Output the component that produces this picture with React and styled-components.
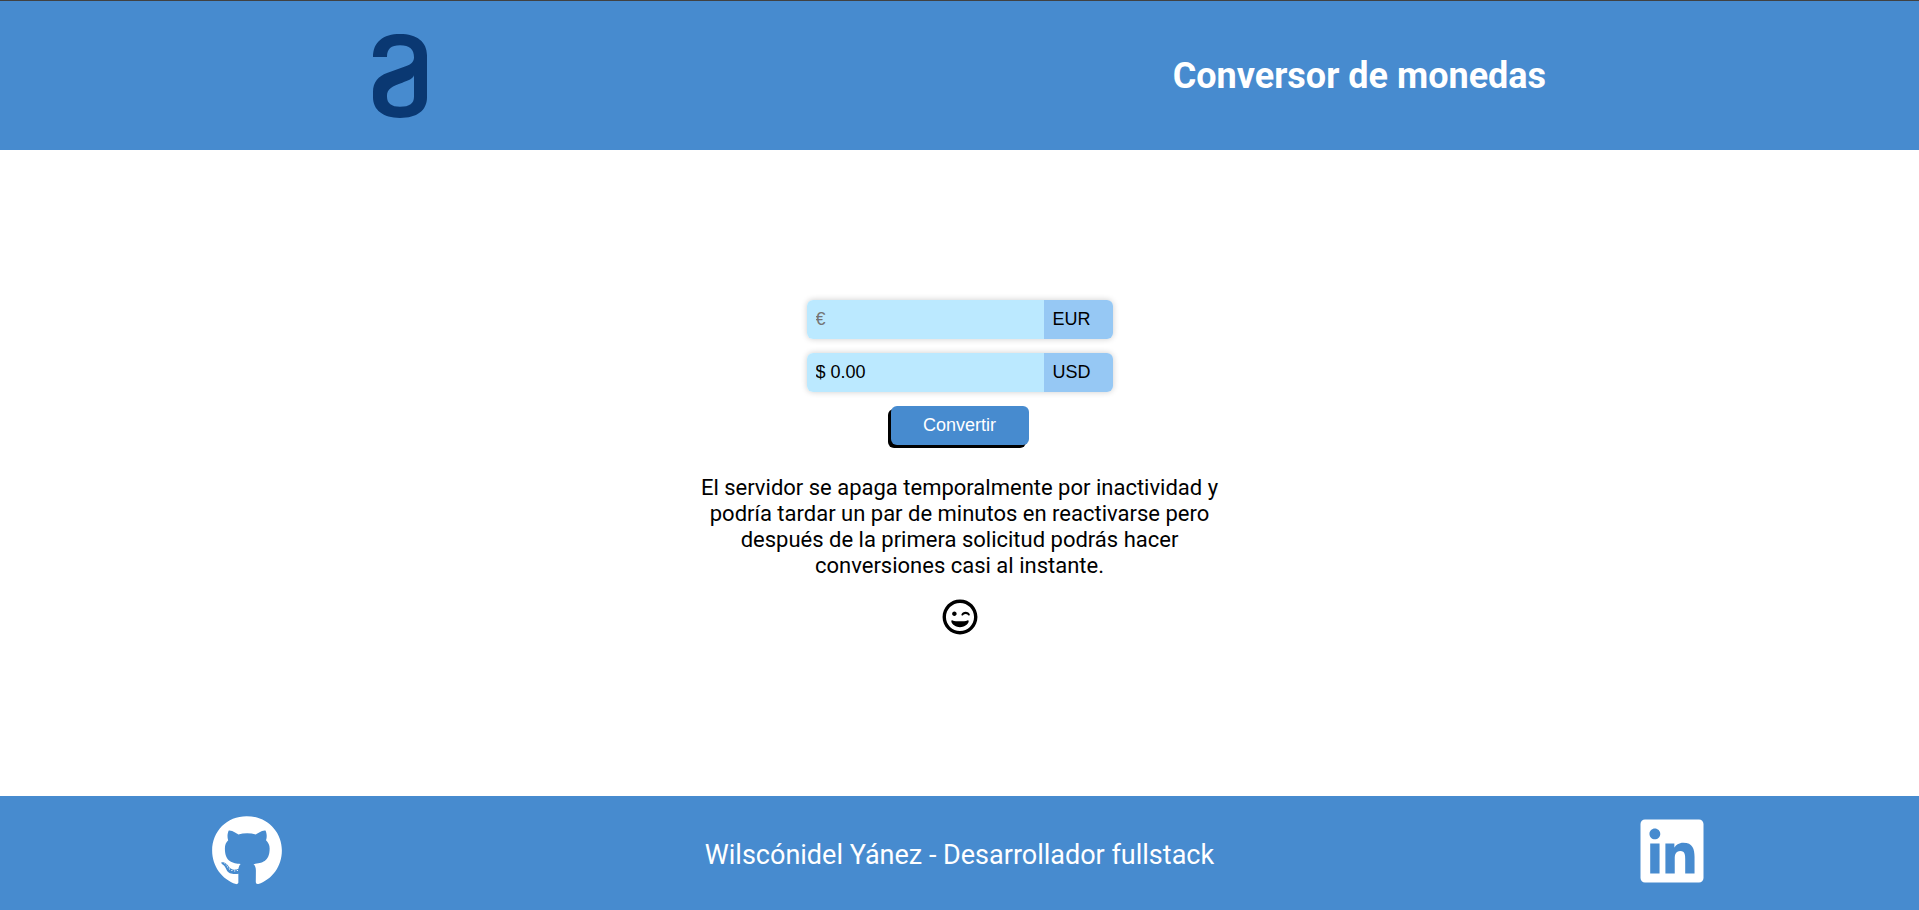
import React, { useState } from "react";
import styled, { createGlobalStyle } from "styled-components";
import { FaGithub, FaLinkedin, FaRegGrinWink } from "react-icons/fa";

const GlobalStyle = createGlobalStyle`
  *, *::before, *::after { box-sizing: border-box; }
  body {
    margin: 0;
    background: #fff;
    color: #000;
    font-family: Roboto, "Liberation Sans", sans-serif;
  }
`;

const Page = styled.div`
  min-height: 100vh;
  display: flex;
  flex-direction: column;
`;

const Header = styled.header`
  min-height: 150px;
  display: flex;
  align-items: center;
  justify-content: space-around;
  background: #478bcf;
  border-top: 1px solid #414141;
`;

const Logo = styled.svg`
  width: 54px;
  height: 84px;
  fill: #0a3872;
`;

const Title = styled.h1`
  margin: 0;
  color: #fff;
  font-size: 36px;
  line-height: 42px;
  font-weight: 700;
`;

const Main = styled.main`
  flex: 1;
  display: flex;
  flex-direction: column;
  align-items: center;
  justify-content: center;
`;

const Form = styled.form`
  display: flex;
  flex-direction: column;
  align-items: center;
  gap: 14px;
`;

const Field = styled.div`
  display: flex;
  width: 306px;
  height: 39px;
  overflow: hidden;
  border-radius: 6px;
  box-shadow: 0 0 6px rgba(0, 0, 0, 0.2);
`;

const AmountInput = styled.input`
  flex: 1;
  min-width: 0;
  border: 0;
  outline: 0;
  padding: 0 9px;
  background: #bbe9ff;
  color: #000;
  font: 18px "Liberation Sans", sans-serif;
  &::placeholder { color: #757575; }
`;

const CurrencySelect = styled.select`
  appearance: none;
  width: 69px;
  border: 0;
  border-radius: 0;
  outline: 0;
  padding: 0 9px;
  background: #96c8f4;
  color: #000;
  font: 18px "Liberation Sans", sans-serif;
`;

const ConvertButton = styled.button`
  width: 138px;
  height: 39px;
  border: 0;
  border-radius: 6px;
  padding: 0;
  background: #478bcf;
  color: #fff;
  font: 18px "Liberation Sans", sans-serif;
  box-shadow: -3px 3px 0 #000;
  cursor: pointer;
`;

const Notice = styled.p`
  max-width: 520px;
  margin: 30px 0 20px;
  font-size: 22px;
  line-height: 26px;
  text-align: center;
`;

const Wink = styled(FaRegGrinWink)`
  width: 36px;
  height: 36px;
  margin-bottom: 12px;
`;

const Footer = styled.footer`
  min-height: 114px;
  display: flex;
  align-items: center;
  justify-content: space-around;
  background: #478bcf;
  color: #fff;
`;

const SocialLink = styled.a`
  display: flex;
  padding-bottom: 4px;
  color: #fff;
  font-size: 72px;
`;

const Author = styled.p`
  margin: 0;
  padding-top: 4px;
  font-size: 27px;
  line-height: 32px;
`;

function CurrencyRow({ name, currency, onCurrency, ...input }) {
  return (
    <Field>
      <AmountInput type="text" name={name} {...input} />
      <CurrencySelect
        aria-label={`Moneda de ${name}`}
        value={currency}
        onChange={(e) => onCurrency(e.target.value)}
      >
        <option value="EUR">EUR</option>
        <option value="USD">USD</option>
      </CurrencySelect>
    </Field>
  );
}

export default function App() {
  const [amount, setAmount] = useState("");
  const [from, setFrom] = useState("EUR");
  const [to, setTo] = useState("USD");

  return (
    <>
      <GlobalStyle />
      <Page>
        <Header>
          <Logo viewBox="0 0 162 252" aria-hidden="true">
            <path
              fillRule="evenodd"
              d="M0 69C0 24 30 0 81 0s81 24 81 64v126c0 40-30 62-81 62S0 228 0 190v-16c0-30 16-47 42-57l56-20c17-6 25-13 25-27 0-24-13-36-42-36-27 0-39 11-39 35Z M123 124c-3 10-17 16-35 22-30 10-46 19-46 38v4c0 20 14 30 39 30 29 0 42-10 42-30Z"
            />
          </Logo>
          <Title>Conversor de monedas</Title>
        </Header>
        <Main>
          <Form onSubmit={(e) => e.preventDefault()}>
            <CurrencyRow
              name="origen"
              aria-label="Cantidad"
              placeholder="€"
              value={amount}
              onChange={(e) => setAmount(e.target.value)}
              currency={from}
              onCurrency={setFrom}
            />
            <CurrencyRow
              name="destino"
              aria-label="Resultado"
              value="$ 0.00"
              readOnly
              currency={to}
              onCurrency={setTo}
            />
            <ConvertButton type="submit">Convertir</ConvertButton>
          </Form>
          <Notice>
            El servidor se apaga temporalmente por inactividad y podría tardar un par de
            minutos en reactivarse pero después de la primera solicitud podrás hacer
            conversiones casi al instante.
          </Notice>
          <Wink aria-hidden="true" />
        </Main>
        <Footer>
          <SocialLink href="#github" aria-label="GitHub">
            <FaGithub />
          </SocialLink>
          <Author>Wilscónidel Yánez - Desarrollador fullstack</Author>
          <SocialLink href="#linkedin" aria-label="LinkedIn">
            <FaLinkedin />
          </SocialLink>
        </Footer>
      </Page>
    </>
  );
}
